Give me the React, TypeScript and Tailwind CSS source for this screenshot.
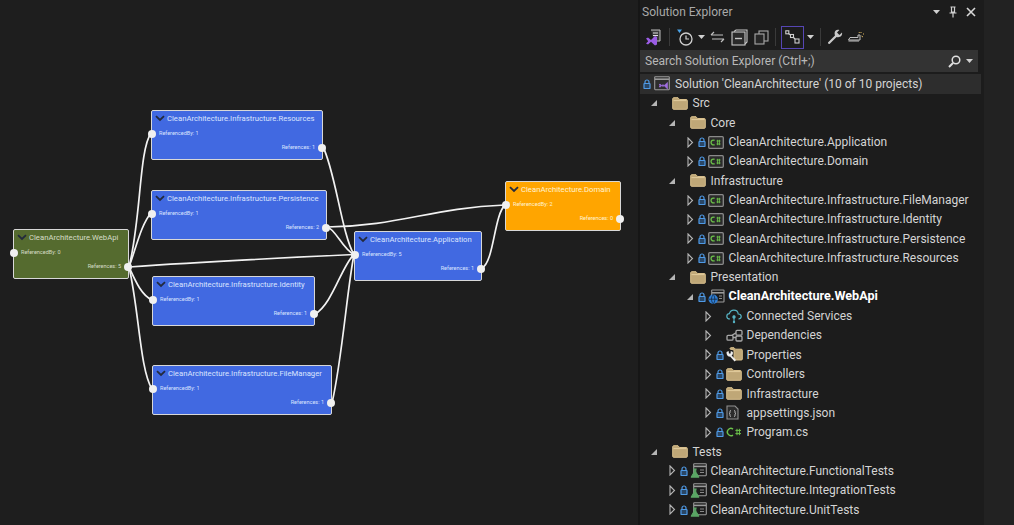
import React from 'react';

const Chevron = () => (
  <svg width="10" height="7" viewBox="0 0 10 7" className="shrink-0">
    <path d="M1 1.2 L5 5 L9 1.2" fill="none" stroke="#232a3c" strokeWidth="1.8" />
  </svg>
);

const Port = ({ side }: { side: 'in' | 'out' }) => (
  <span
    className={`absolute w-[8px] h-[8px] rounded-full bg-[#f0f0f0] ${
      side === 'in' ? 'left-[-4px] top-[19px]' : 'right-[-4px] top-[33px]'
    }`}
  />
);

type NodeProps = {
  title: string;
  refBy: number;
  refs: number;
  className: string;
};

const GraphNode = ({ title, refBy, refs, className }: NodeProps) => (
  <div className={`absolute h-[50px] rounded-[2px] border border-[#d8d8d8] ${className}`}>
    <div className="flex items-center h-[15px] pl-[3px] gap-[2px] text-[7.7px] leading-none whitespace-nowrap">
      <Chevron />
      <span>{title}</span>
    </div>
    <div className="pl-[7px] mt-[3px] text-[5.5px] leading-[8px]">ReferencedBy: {refBy}</div>
    <div className="pr-[7px] mt-[6px] text-right text-[5.5px] leading-[8px]">References: {refs}</div>
    <Port side="in" />
    <Port side="out" />
  </div>
);

const Graph = () => (
  <div className="relative w-[638px] h-full shrink-0">
    <svg className="absolute inset-0" width="638" height="525" fill="none" stroke="#f2f2f2" strokeWidth="1.7">
      <path d="M129 267 C141 220 139 150 151 133" />
      <path d="M129 267 C137 245 141 225 151 213" />
      <path d="M129 267 C135 280 141 295 152 300" />
      <path d="M129 267 C139 310 140 370 152 389" />
      <path d="M129 267 C200 262 280 258 354 254.5" />
      <path d="M323 147 C335 170 342 235 354 254.5" />
      <path d="M327 227 C335 228 343 250 354 254.5" />
      <path d="M327 227 C400 226 430 208 505 205" />
      <path d="M315 314 C332 305 342 265 354 254.5" />
      <path d="M332 403 C342 360 347 290 354 254.5" />
      <path d="M482 268 C494 262 494 215 505 205" />
    </svg>
    <GraphNode title="CleanArchitecture.WebApi" refBy={0} refs={5} className="left-[13px] top-[229px] w-[116px] bg-[#556b2f] text-[#d5ddc8]" />
    <GraphNode title="CleanArchitecture.Infrastructure.Resources" refBy={1} refs={1} className="left-[151px] top-[110px] w-[172px] bg-[#4169e1] text-[#dbe4ff]" />
    <GraphNode title="CleanArchitecture.Infrastructure.Persistence" refBy={1} refs={2} className="left-[151px] top-[190px] w-[176px] bg-[#4169e1] text-[#dbe4ff]" />
    <GraphNode title="CleanArchitecture.Infrastructure.Identity" refBy={1} refs={1} className="left-[152px] top-[276px] w-[163px] bg-[#4169e1] text-[#dbe4ff]" />
    <GraphNode title="CleanArchitecture.Infrastructure.FileManager" refBy={1} refs={1} className="left-[152px] top-[365px] w-[180px] bg-[#4169e1] text-[#dbe4ff]" />
    <GraphNode title="CleanArchitecture.Application" refBy={5} refs={1} className="left-[354px] top-[231px] w-[128px] bg-[#4169e1] text-[#dbe4ff]" />
    <GraphNode title="CleanArchitecture.Domain" refBy={2} refs={0} className="left-[505px] top-[181px] w-[116px] bg-[#ffa500] text-[#fff3d6]" />
  </div>
);

const Lock = () => (
  <svg width="8" height="10" viewBox="0 0 8 10" className="shrink-0">
    <path d="M2 4.5 V3 A2 2 0 0 1 6 3 V4.5" fill="none" stroke="#4f9ae6" strokeWidth="1.2" />
    <rect x="1" y="4.5" width="6" height="5" rx="0.5" fill="#2a4766" stroke="#4f9ae6" strokeWidth="1.2" />
  </svg>
);

const Folder = () => (
  <svg width="16" height="13" viewBox="0 0 16 13" className="shrink-0">
    <path d="M0.7 2 C0.7 1 1.2 0.7 2 0.7 H6 L7.5 2.5 H14.3 C15 2.5 15.3 3 15.3 3.6 V11.3 C15.3 12 15 12.3 14.3 12.3 H1.7 C1 12.3 0.7 12 0.7 11.3 Z" fill="#bfa777" stroke="#d8bf8c" strokeWidth="1" />
    <path d="M1.5 3.6 H14.5" stroke="#e2cc9d" strokeWidth="1" />
  </svg>
);

const CsProject = () => (
  <svg width="16" height="13" viewBox="0 0 16 13" className="shrink-0">
    <rect x="0.7" y="0.7" width="14.6" height="11.6" rx="1" fill="#2b2b2b" stroke="#8a8a8a" strokeWidth="1.3" />
    <path d="M6.6 4.4 A2.4 2.4 0 1 0 6.6 8.6" fill="none" stroke="#6cc24a" strokeWidth="1.3" />
    <path d="M8.5 5 H12.5 M8.5 8 H12.5 M9.6 3.8 V9.2 M11.4 3.8 V9.2" stroke="#6cc24a" strokeWidth="0.9" />
  </svg>
);

const WebProject = () => (
  <svg width="17" height="16" viewBox="0 0 17 16" className="shrink-0">
    <rect x="3.7" y="1" width="12.3" height="12" rx="0.6" fill="none" stroke="#9a9a9a" strokeWidth="1.1" />
    <path d="M4 3.8 H16" stroke="#9a9a9a" strokeWidth="1.6" />
    <path d="M11 7 H14 M11 9.5 H14" stroke="#8a8a8a" />
    <circle cx="5.2" cy="10.2" r="4.7" fill="#2f7fd6" />
    <path d="M0.8 10.2 H9.6 M5.2 5.6 C3 8 3 12.4 5.2 14.8 C7.4 12.4 7.4 8 5.2 5.6" fill="none" stroke="#12253a" strokeWidth="0.8" />
  </svg>
);

const TestProject = () => (
  <svg width="17" height="15" viewBox="0 0 17 15" className="shrink-0">
    <rect x="3.7" y="0.7" width="12.6" height="12" rx="0.6" fill="none" stroke="#9a9a9a" strokeWidth="1.1" />
    <path d="M4 3.4 H16" stroke="#9a9a9a" strokeWidth="1.6" />
    <path d="M10 7 H14 M10 9.5 H14" stroke="#8a8a8a" />
    <path d="M3.3 6 H6.7 M4.2 6 V9 L1 14.2 H9 L5.8 9 V6" fill="#5aa564" stroke="#5aa564" strokeWidth="1" />
  </svg>
);

const ConnectedServices = () => (
  <svg width="16" height="15" viewBox="0 0 16 15" className="shrink-0">
    <path d="M4 10 C1.5 10 0.8 8.4 0.8 7.2 C0.8 5.6 2 4.6 3.4 4.6 C4 2.4 5.8 1.2 7.8 1.2 C10.2 1.2 12 3 12.2 5 C14 5 15.2 6.2 15.2 7.6 C15.2 9 14 10 12.4 10" fill="none" stroke="#56b3c4" strokeWidth="1.2" />
    <path d="M8 6.5 V13" stroke="#56b3c4" strokeWidth="1.1" />
    <circle cx="8" cy="8" r="1.7" fill="#56b3c4" />
    <circle cx="8" cy="13" r="1.2" fill="#56b3c4" />
  </svg>
);

const Dependencies = () => (
  <svg width="17" height="13" viewBox="0 0 17 13" className="shrink-0" fill="none" stroke="#a8a8a8" strokeWidth="1.3">
    <rect x="1" y="6.4" width="6" height="4.8" rx="1" />
    <rect x="10" y="1.4" width="6" height="4.8" rx="1" />
    <rect x="10" y="7.2" width="6" height="4.8" rx="1" />
    <path d="M7 8.5 H10 M6 6.4 L10 3.8" />
  </svg>
);

const PropertiesIcon = () => (
  <svg width="17" height="15" viewBox="0 0 17 15" className="shrink-0">
    <path d="M4 2 C4 1 4.5 0.7 5 0.7 H8 L9.5 2.2 H15.3 C16 2.2 16.3 2.7 16.3 3.3 V12 C16.3 12.7 16 13 15.3 13 H8 V3 Z" fill="#bfa777" stroke="#d8bf8c" strokeWidth="1" />
    <path d="M0.6 5 L2.6 4 L3 6.4 L4.6 6.4 L4.8 4 L6.8 5 C7.2 6.6 6.6 8 5.6 8.6 L10 13 L8.6 14.4 L4 9.6 C2 10 0.2 7.6 0.6 5 Z" fill="#ececec" />
  </svg>
);

const JsonFile = () => (
  <svg width="13" height="15" viewBox="0 0 13 15" className="shrink-0">
    <path d="M1 1 H9 L12 4 V14 H1 Z" fill="#2b2b2b" stroke="#8f8f8f" strokeWidth="1.1" />
    <path d="M5 5.5 C4 5.5 4 6 4 7 C4 8 3.6 8.4 3 8.5 C3.6 8.6 4 9 4 10 C4 11 4 11.5 5 11.5 M8 5.5 C9 5.5 9 6 9 7 C9 8 9.4 8.4 10 8.5 C9.4 8.6 9 9 9 10 C9 11 9 11.5 8 11.5" fill="none" stroke="#cfcfcf" strokeWidth="0.9" />
  </svg>
);

const CsFile = () => (
  <svg width="16" height="12" viewBox="0 0 16 12" className="shrink-0">
    <path d="M7 3 A3.6 3.6 0 1 0 7 9" fill="none" stroke="#6cc24a" strokeWidth="1.5" />
    <path d="M9.4 4.4 H15 M9.4 7.6 H15 M11 2.8 V9.2 M13.4 2.8 V9.2" stroke="#6cc24a" strokeWidth="1" />
  </svg>
);

const SolutionIcon = () => (
  <svg width="16" height="15" viewBox="0 0 16 15" className="shrink-0">
    <rect x="0.7" y="0.7" width="14.6" height="13" rx="0.6" fill="none" stroke="#9a9a9a" strokeWidth="1.1" />
    <path d="M1 3.2 H15" stroke="#9a9a9a" strokeWidth="1.6" />
    <path d="M6 8 L9 10.6 L13.5 6.4 V13 L9 8.6 L6 11.2 L5 10.4 L6.6 9.6 L5 8.8 Z" fill="#a06ee0" stroke="#a06ee0" strokeWidth="0.6" />
  </svg>
);

const Caret = () => (
  <svg width="7" height="4" viewBox="0 0 7 4" className="shrink-0">
    <path d="M0 0 H7 L3.5 4 Z" fill="#d0d0d0" />
  </svg>
);

const Arrow = ({ open }: { open: boolean }) =>
  open ? (
    <svg width="12" height="10" viewBox="0 0 12 10" className="shrink-0">
      <path d="M9 2 V8 H3 Z" fill="#b5b5b5" />
    </svg>
  ) : (
    <svg width="12" height="11" viewBox="0 0 12 11" className="shrink-0">
      <path d="M4 1 L8.5 5.5 L4 10 Z" fill="none" stroke="#b5b5b5" strokeWidth="1.1" />
    </svg>
  );

type RowProps = {
  indent: string;
  open?: boolean;
  lock?: boolean;
  icon: React.ReactNode;
  label: string;
  bold?: boolean;
};

const Row = ({ indent, open = false, lock = false, icon, label, bold = false }: RowProps) => (
  <div className={`flex items-center h-[19.35px] whitespace-nowrap ${indent}`}>
    <span className="w-[13px] flex items-center justify-center shrink-0">
      <Arrow open={open} />
    </span>
    <span className="w-[12px] flex items-center justify-center shrink-0">{lock && <Lock />}</span>
    <span className="w-[20.5px] flex items-center shrink-0">{icon}</span>
    <span className={bold ? 'font-bold text-white text-[12.6px]' : ''}>{label}</span>
  </div>
);

const Toolbar = () => (
  <div className="flex items-center h-[26px] pl-[5px]">
    {/* solution switcher */}
    <svg width="17" height="17" viewBox="0 0 17 17" className="shrink-0">
      <path d="M6 1 H15 V12 H9" fill="#3a3a3a" stroke="#bdbdbd" strokeWidth="1" />
      <path d="M8 4 H13 M8 6.5 H13" stroke="#e0e0e0" />
      <path d="M1 9.5 L3 8.5 L6 11 L10 7 L12 8 V15.5 L10 16.5 L6 12.8 L3 15.5 L1 14.5 L3.2 12.2 Z" fill="#9b5de5" />
    </svg>
    <span className="w-px h-[18px] bg-[#3a3a3a] ml-[7px] mr-[7px]" />
    {/* pending changes */}
    <svg width="16" height="17" viewBox="0 0 16 17" className="shrink-0">
      <path d="M0 0.5 H5 L2.5 4 Z" fill="#4aa3e8" />
      <circle cx="9" cy="10" r="6" fill="none" stroke="#d0d0d0" strokeWidth="1.3" />
      <path d="M9 6.5 V10 H12" fill="none" stroke="#d0d0d0" strokeWidth="1.2" />
    </svg>
    <span className="ml-[5px] mr-[5px]"><Caret /></span>
    {/* sync */}
    <svg width="15" height="12" viewBox="0 0 15 12" className="shrink-0" fill="none" stroke="#c0c0c0" strokeWidth="1.2">
      <path d="M1 4 H13 M1 4 L4 1 M14 8 H2 M14 8 L11 11" />
    </svg>
    {/* collapse all */}
    <svg width="17" height="17" viewBox="0 0 17 17" className="ml-[6px] shrink-0" fill="none" stroke="#c8c8c8" strokeWidth="1.1">
      <path d="M3 2.5 L5 1 H16 V13 L14 15" />
      <rect x="1" y="3" width="13" height="13" fill="#2a2a2a" />
      <path d="M4 9.5 H11" strokeWidth="1.4" />
    </svg>
    {/* show all */}
    <svg width="15" height="15" viewBox="0 0 15 15" className="ml-[6px] shrink-0" fill="none" stroke="#a8a8a8" strokeWidth="1.1">
      <rect x="5" y="1" width="9" height="10" />
      <rect x="1" y="4" width="9" height="10" fill="#262626" />
    </svg>
    <span className="w-px h-[18px] bg-[#3a3a3a] ml-[6px] mr-[5px]" />
    {/* active filter button */}
    <div className="w-[23px] h-[23px] border border-[#5646b4] flex items-center justify-center shrink-0">
      <svg width="15" height="14" viewBox="0 0 15 14" fill="none" stroke="#d0d0d0" strokeWidth="1.1">
        <rect x="0.8" y="0.8" width="3" height="3" />
        <rect x="5.5" y="4.5" width="3" height="3" />
        <rect x="10" y="9" width="4" height="4" />
        <path d="M3.5 3.5 L5.5 5 M8.5 7.5 L10 9" />
      </svg>
    </div>
    <span className="ml-[3px]"><Caret /></span>
    <span className="w-px h-[18px] bg-[#3a3a3a] ml-[6px] mr-[6px]" />
    {/* wrench */}
    <svg width="16" height="16" viewBox="0 0 16 16" className="shrink-0">
      <path d="M15 3.6 L12.4 6 L10 3.6 L12.4 1 C9.8 0 7.4 1.8 7.6 4.6 C7.6 5.4 7.8 6 8 6.4 L1.2 13.2 C0.4 14 1.8 15.6 2.8 14.8 L9.6 8 C12.8 9 15.8 6.8 15 3.6 Z" fill="#c8c8c8" />
    </svg>
    {/* preview brush */}
    <svg width="17" height="12" viewBox="0 0 17 12" className="ml-[5px] shrink-0">
      <path d="M0.5 9 L2 6.5 H10 V4 H12 V9 Z M0.5 10 H11" fill="none" stroke="#c0c0c0" strokeWidth="1" />
      <path d="M13 1 V2 M15 3 H16 M13.5 5 L15 6 M11 1 L11.5 2" stroke="#d8b460" strokeWidth="1" />
    </svg>
  </div>
);

const SolutionExplorer = () => (
  <div className="w-[344px] h-full bg-[#1c1c1c] text-[#d4d4d4] text-[12px] shrink-0">
    <div className="flex items-center justify-between h-[24px] pl-[2px] pr-[8px] text-[#a9a9a9]">
      <span>Solution Explorer</span>
      <div className="flex items-center gap-[9px]">
        <Caret />
        <svg width="8" height="12" viewBox="0 0 8 12" fill="none" stroke="#d0d0d0" strokeWidth="1.2">
          <path d="M1.5 1 H6.5 M2.5 1 V6 H5.5 V1 M0.5 7 H7.5 M4 7 V11.5" />
        </svg>
        <svg width="10" height="10" viewBox="0 0 10 10" stroke="#d8d8d8" strokeWidth="1.6">
          <path d="M1 1 L9 9 M9 1 L1 9" />
        </svg>
      </div>
    </div>
    <Toolbar />
    <div className="flex items-center justify-between w-[338px] h-[22px] bg-[#333333] pl-[5px] pr-[5px] text-[#b8b8b8]">
      <span>Search Solution Explorer (Ctrl+;)</span>
      <div className="flex items-center gap-[5px]">
        <svg width="13" height="13" viewBox="0 0 13 13" fill="none" stroke="#e0e0e0">
          <circle cx="8" cy="5" r="3.8" strokeWidth="1.5" />
          <path d="M5 8 L1 12" strokeWidth="2" />
        </svg>
        <Caret />
      </div>
    </div>
    <div className="flex items-center w-[341px] h-[19.7px] mt-[2px] bg-[#2d2d2d] pl-[3px] whitespace-nowrap">
      <Lock />
      <span className="ml-[3px] mr-[5px]"><SolutionIcon /></span>
      <span>Solution 'CleanArchitecture' (10 of 10 projects)</span>
    </div>
    <Row indent="pl-[7px]" open icon={<Folder />} label="Src" />
    <Row indent="pl-[25px]" open icon={<Folder />} label="Core" />
    <Row indent="pl-[43px]" lock icon={<CsProject />} label="CleanArchitecture.Application" />
    <Row indent="pl-[43px]" lock icon={<CsProject />} label="CleanArchitecture.Domain" />
    <Row indent="pl-[25px]" open icon={<Folder />} label="Infrastructure" />
    <Row indent="pl-[43px]" lock icon={<CsProject />} label="CleanArchitecture.Infrastructure.FileManager" />
    <Row indent="pl-[43px]" lock icon={<CsProject />} label="CleanArchitecture.Infrastructure.Identity" />
    <Row indent="pl-[43px]" lock icon={<CsProject />} label="CleanArchitecture.Infrastructure.Persistence" />
    <Row indent="pl-[43px]" lock icon={<CsProject />} label="CleanArchitecture.Infrastructure.Resources" />
    <Row indent="pl-[25px]" open icon={<Folder />} label="Presentation" />
    <Row indent="pl-[43px]" open lock icon={<WebProject />} label="CleanArchitecture.WebApi" bold />
    <Row indent="pl-[61px]" icon={<ConnectedServices />} label="Connected Services" />
    <Row indent="pl-[61px]" icon={<Dependencies />} label="Dependencies" />
    <Row indent="pl-[61px]" lock icon={<PropertiesIcon />} label="Properties" />
    <Row indent="pl-[61px]" lock icon={<Folder />} label="Controllers" />
    <Row indent="pl-[61px]" lock icon={<Folder />} label="Infrastracture" />
    <Row indent="pl-[61px]" lock icon={<JsonFile />} label="appsettings.json" />
    <Row indent="pl-[61px]" lock icon={<CsFile />} label="Program.cs" />
    <Row indent="pl-[7px]" open icon={<Folder />} label="Tests" />
    <Row indent="pl-[25px]" lock icon={<TestProject />} label="CleanArchitecture.FunctionalTests" />
    <Row indent="pl-[25px]" lock icon={<TestProject />} label="CleanArchitecture.IntegrationTests" />
    <Row indent="pl-[25px]" lock icon={<TestProject />} label="CleanArchitecture.UnitTests" />
  </div>
);

export default function App() {
  return (
    <div className="flex w-[1014px] h-[525px] overflow-hidden bg-[#1e1e1e] font-['Roboto',sans-serif]">
      <Graph />
      <div className="w-[2px] h-full bg-[#161616] shrink-0" />
      <SolutionExplorer />
      <div className="flex-1 h-full bg-[#222222]" />
    </div>
  );
}
